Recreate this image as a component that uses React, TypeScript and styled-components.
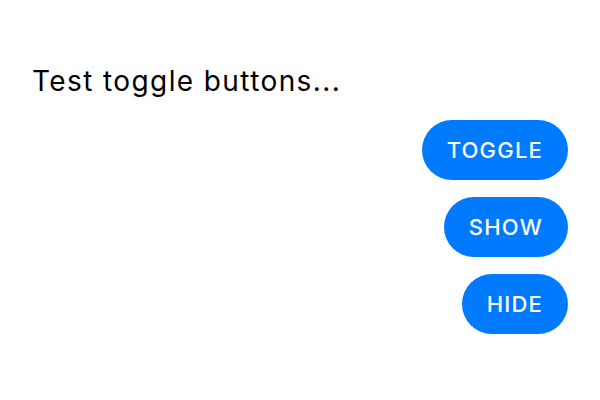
import styled, { createGlobalStyle } from "styled-components";

const Global = createGlobalStyle`
  body {
    margin: 0;
    background: #ffffff;
    font-family: Inter, "Noto Sans", sans-serif;
  }
`

const Page = styled.div`
  display: flex;
  flex-direction: column;
  padding: 64px 32px 0 32px;
`

const Title = styled.h1`
  margin: 0 0 22px 0;
  font-size: 28px;
  font-weight: 400;
  line-height: 34px;
  letter-spacing: 1.4px;
  color: #000000;
`

const Actions = styled.div`
  display: flex;
  flex-direction: column;
  align-items: flex-end;
  gap: 17px;
`

const Button = styled.button`
  height: 60px;
  padding: 0 25px;
  border: none;
  border-radius: 30px;
  background: #007aff;
  color: #ffffff;
  font-family: Inter, "Noto Sans", sans-serif;
  font-size: 22px;
  font-weight: 500;
  letter-spacing: 1.2px;
  cursor: pointer;
`

const App = () => {
  return (
    <>
      <Global />
      <Page>
        <Title>Test toggle buttons...</Title>
        <Actions>
          <Button>TOGGLE</Button>
          <Button>SHOW</Button>
          <Button>HIDE</Button>
        </Actions>
      </Page>
    </>
  )
}

export default App;
